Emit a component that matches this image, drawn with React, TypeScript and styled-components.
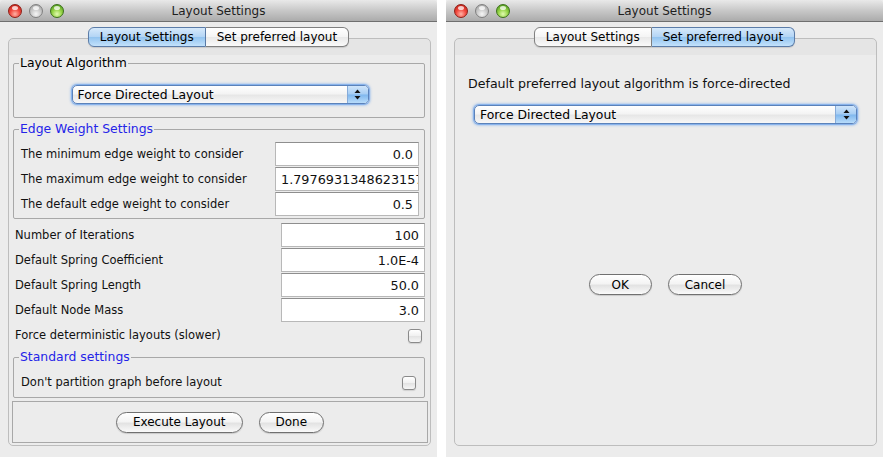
import React from "react";
import styled, { createGlobalStyle, css } from "styled-components";

const Global = createGlobalStyle`
  html, body { margin: 0; padding: 0; background: #fff; }
  body {
    font-family: "DejaVu Sans", "Liberation Sans", sans-serif;
    font-size: 12px;
    color: #000;
  }
  #root { width: 883px; height: 457px; overflow: hidden; }
`;

const Desktop = styled.div`
  display: flex;
  gap: 9px;
  width: 883px;
  height: 457px;
  background: #fff;
`;

const Window = styled.div`
  width: 437px;
  height: 457px;
  background: #ececec;
  display: flex;
  flex-direction: column;
`;

const TitleBar = styled.div`
  height: 21px;
  border-bottom: 1px solid #6f6f6f;
  border-radius: 4px 4px 0 0;
  background: linear-gradient(#e9e9e9, #c8c8c8 50%, #ababab);
  display: grid;
  grid-template-columns: 1fr auto 1fr;
  align-items: center;
`;

const Lights = styled.div`
  display: flex;
  gap: 7px;
  padding-left: 8px;
`;

const lightColors = {
  red: css`
    background: radial-gradient(circle at 50% 75%, #ffb3a6 0%, #f24a3f 45%, #b5170f 100%);
    border-color: #8e1f17;
  `,
  gray: css`
    background: radial-gradient(circle at 50% 75%, #f6f6f6 0%, #cbcbcb 45%, #9a9a9a 100%);
    border-color: #808080;
  `,
  green: css`
    background: radial-gradient(circle at 50% 75%, #e2fbb0 0%, #95d346 45%, #3e8c14 100%);
    border-color: #3c701a;
  `,
};

const Light = styled.span<{ $c: "red" | "gray" | "green" }>`
  position: relative;
  width: 14px;
  height: 14px;
  box-sizing: border-box;
  border-radius: 50%;
  border: 1px solid;
  ${(p) => lightColors[p.$c]}
  &::after {
    content: "";
    position: absolute;
    left: 3px;
    top: 1px;
    width: 6px;
    height: 4px;
    border-radius: 50%;
    background: rgba(255, 255, 255, 0.75);
  }
`;

const Title = styled.div`
  font-size: 12px;
  color: #1e1e1e;
  white-space: nowrap;
`;

const TabStrip = styled.div`
  display: flex;
  justify-content: center;
  margin-top: 5px;
  position: relative;
  z-index: 1;
`;

const Tab = styled.div<{ $active?: boolean; $first?: boolean }>`
  height: 20px;
  box-sizing: border-box;
  padding: 0 11px;
  display: flex;
  align-items: center;
  white-space: nowrap;
  border: 1px solid ${(p) => (p.$active ? "#5b7ca8" : "#808080")};
  border-left-width: ${(p) => (p.$first ? 1 : 0)}px;
  border-radius: ${(p) => (p.$first ? "6px 0 0 6px" : "0 6px 6px 0")};
  background: ${(p) =>
    p.$active
      ? "linear-gradient(#d6e9fb 0%, #b4d5f5 48%, #93c4f0 52%, #c3e2fb 100%)"
      : "linear-gradient(#ffffff 0%, #f5f5f5 48%, #e9e9e9 52%, #fafafa 100%)"};
  box-shadow: 0 1px 1px rgba(0, 0, 0, 0.12);
`;

const Panel = styled.div`
  margin: -9px 6px 0 8px;
  height: 408px;
  box-sizing: border-box;
  border: 1px solid #bdbdbd;
  border-radius: 5px;
  background: linear-gradient(#e5e5e5 0px, #e5e5e5 16px, #ececec 16px);
  display: flex;
  flex-direction: column;
`;

const SettingsContent = styled.div`
  padding-top: 17px;
  display: flex;
  flex-direction: column;
`;

const Group = styled.fieldset<{ $mt?: number; $pt: number; $pb: number }>`
  margin: ${(p) => p.$mt ?? 0}px 5px 0 4px;
  padding: ${(p) => p.$pt}px 5px ${(p) => p.$pb}px 7px;
  border: 1px solid #a8a8a8;
  border-radius: 2px;
  min-width: 0;
`;

const Legend = styled.legend<{ $blue?: boolean }>`
  padding: 0 1px;
  margin-left: -2px;
  line-height: 14px;
  font-size: 12.4px;
  color: ${(p) => (p.$blue ? "#2424e8" : "#000")};
`;

const Combo = styled.div<{ $mx: string }>`
  height: 19px;
  box-sizing: border-box;
  margin: 2px ${(p) => p.$mx} 2px;
  border: 1px solid #5b82ba;
  border-radius: 5px;
  box-shadow: 0 0 0 1px rgba(120, 170, 235, 0.75), 0 0 2px 2px rgba(120, 170, 235, 0.45);
  background: linear-gradient(#ffffff 0%, #f4f4f4 45%, #e7e7e7 55%, #f7f7f7 100%);
  display: flex;
  align-items: center;
  overflow: hidden;
`;

const ComboText = styled.span`
  flex: 1;
  padding-left: 5px;
  font-size: 12.4px;
  white-space: nowrap;
`;

const ComboArrows = styled.span`
  width: 20px;
  align-self: stretch;
  border-left: 1px solid #86abd9;
  background: linear-gradient(#cfe5fb 0%, #a7cdf3 48%, #7fb7ee 52%, #b8dcfa 100%);
  display: flex;
  align-items: center;
  justify-content: center;
`;

const FormRows = styled.div<{ $mt?: number; $px?: string }>`
  margin-top: ${(p) => p.$mt ?? 0}px;
  padding: ${(p) => p.$px ?? "0"};
  display: flex;
  flex-direction: column;
`;

const FormRow = styled.div`
  height: 25px;
  display: flex;
  align-items: flex-start;
  justify-content: space-between;
`;

const Label = styled.span`
  line-height: 25px;
  font-size: 11.5px;
  white-space: nowrap;
  color: #111;
`;

const Field = styled.div<{ $left?: boolean }>`
  width: 144px;
  height: 24px;
  box-sizing: border-box;
  background: #fff;
  border: 1px solid #b8b8b8;
  border-top-color: #8e8e8e;
  display: flex;
  align-items: center;
  justify-content: ${(p) => (p.$left ? "flex-start" : "flex-end")};
  padding: ${(p) => (p.$left ? "0 0 0 5px" : "0 5px 0 0")};
  overflow: hidden;
  white-space: nowrap;
  font-size: 12.8px;
  color: #111;
`;

const Check = styled.span<{ $mr: number }>`
  width: 14px;
  height: 14px;
  box-sizing: border-box;
  align-self: center;
  margin-right: ${(p) => p.$mr}px;
  border: 1px solid #8a8a8a;
  border-radius: 3px;
  background: linear-gradient(#ffffff, #f0f0f0 50%, #e2e2e2 51%, #f6f6f6);
  box-shadow: 0 1px 1px rgba(0, 0, 0, 0.12);
`;

const ButtonBar = styled.div`
  margin: 3px 2px 0 3px;
  height: 42px;
  box-sizing: border-box;
  border: 1px solid #a8a8a8;
  display: flex;
  justify-content: center;
  align-items: center;
  gap: 16px;
`;

const ButtonRow = styled.div<{ $mt: number }>`
  margin-top: ${(p) => p.$mt}px;
  display: flex;
  justify-content: center;
  gap: 16px;
`;

const PushButton = styled.button`
  height: 21px;
  min-width: 63px;
  box-sizing: border-box;
  padding: 0 16px;
  border: 1px solid #707070;
  border-radius: 11px;
  background: linear-gradient(#ffffff 0%, #f4f4f4 45%, #e3e3e3 55%, #fafafa 100%);
  box-shadow: 0 1px 1px rgba(0, 0, 0, 0.15);
  font-family: "DejaVu Sans", "Liberation Sans", sans-serif;
  font-size: 12px;
  color: #000;
  white-space: nowrap;
`;

const PrefContent = styled.div`
  padding-top: 37px;
  display: flex;
  flex-direction: column;
`;

const PrefLabel = styled.div`
  line-height: 15px;
  font-size: 12.6px;
  margin-left: 13px;
  margin-bottom: 12px;
  white-space: nowrap;
  color: #111;
`;

const Arrows = () => (
  <svg width="7" height="11" viewBox="0 0 7 11">
    <path d="M3.5 0.5 L6.5 4 L0.5 4 Z" fill="#111" />
    <path d="M0.5 7 L6.5 7 L3.5 10.5 Z" fill="#111" />
  </svg>
);

const TitleBarView = () => (
  <TitleBar>
    <Lights>
      <Light $c="red" />
      <Light $c="gray" />
      <Light $c="green" />
    </Lights>
    <Title>Layout Settings</Title>
    <span />
  </TitleBar>
);

const Tabs = ({ active }: { active: 0 | 1 }) => (
  <TabStrip>
    <Tab $first $active={active === 0}>Layout Settings</Tab>
    <Tab $active={active === 1}>Set preferred layout</Tab>
  </TabStrip>
);

const edgeRows: [string, string, boolean?][] = [
  ["The minimum edge weight to consider", "0.0"],
  ["The maximum edge weight to consider", "1.7976931348623157E308", true],
  ["The default edge weight to consider", "0.5"],
];

const mainRows: [string, string][] = [
  ["Number of Iterations", "100"],
  ["Default Spring Coefficient", "1.0E-4"],
  ["Default Spring Length", "50.0"],
  ["Default Node Mass", "3.0"],
];

export default function App() {
  return (
    <>
      <Global />
      <Desktop>
        <Window>
          <TitleBarView />
          <Tabs active={0} />
          <Panel>
            <SettingsContent>
              <Group $pt={13} $pb={11}>
                <Legend>Layout Algorithm</Legend>
                <Combo $mx="auto" style={{ width: 297 }}>
                  <ComboText>Force Directed Layout</ComboText>
                  <ComboArrows>
                    <Arrows />
                  </ComboArrows>
                </Combo>
              </Group>
              <Group $mt={4} $pt={6} $pb={1}>
                <Legend $blue>Edge Weight Settings</Legend>
                {edgeRows.map(([l, v, left]) => (
                  <FormRow key={l}>
                    <Label>{l}</Label>
                    <Field $left={left}>{v}</Field>
                  </FormRow>
                ))}
              </Group>
              <FormRows $mt={4} $px="0 5px 0 6px">
                {mainRows.map(([l, v]) => (
                  <FormRow key={l}>
                    <Label>{l}</Label>
                    <Field>{v}</Field>
                  </FormRow>
                ))}
                <FormRow>
                  <Label>Force deterministic layouts (slower)</Label>
                  <Check $mr={3} />
                </FormRow>
              </FormRows>
              <Group $mt={2} $pt={6} $pb={2}>
                <Legend $blue>Standard settings</Legend>
                <FormRow>
                  <Label>Don't partition graph before layout</Label>
                  <Check $mr={3} />
                </FormRow>
              </Group>
              <ButtonBar>
                <PushButton>Execute Layout</PushButton>
                <PushButton>Done</PushButton>
              </ButtonBar>
            </SettingsContent>
          </Panel>
        </Window>
        <Window>
          <TitleBarView />
          <Tabs active={1} />
          <Panel>
            <PrefContent>
              <PrefLabel>Default preferred layout algorithm is force-directed</PrefLabel>
              <Combo $mx="19px">
                <ComboText>Force Directed Layout</ComboText>
                <ComboArrows>
                  <Arrows />
                </ComboArrows>
              </Combo>
              <ButtonRow $mt={148}>
                <PushButton>OK</PushButton>
                <PushButton>Cancel</PushButton>
              </ButtonRow>
            </PrefContent>
          </Panel>
        </Window>
      </Desktop>
    </>
  );
}
